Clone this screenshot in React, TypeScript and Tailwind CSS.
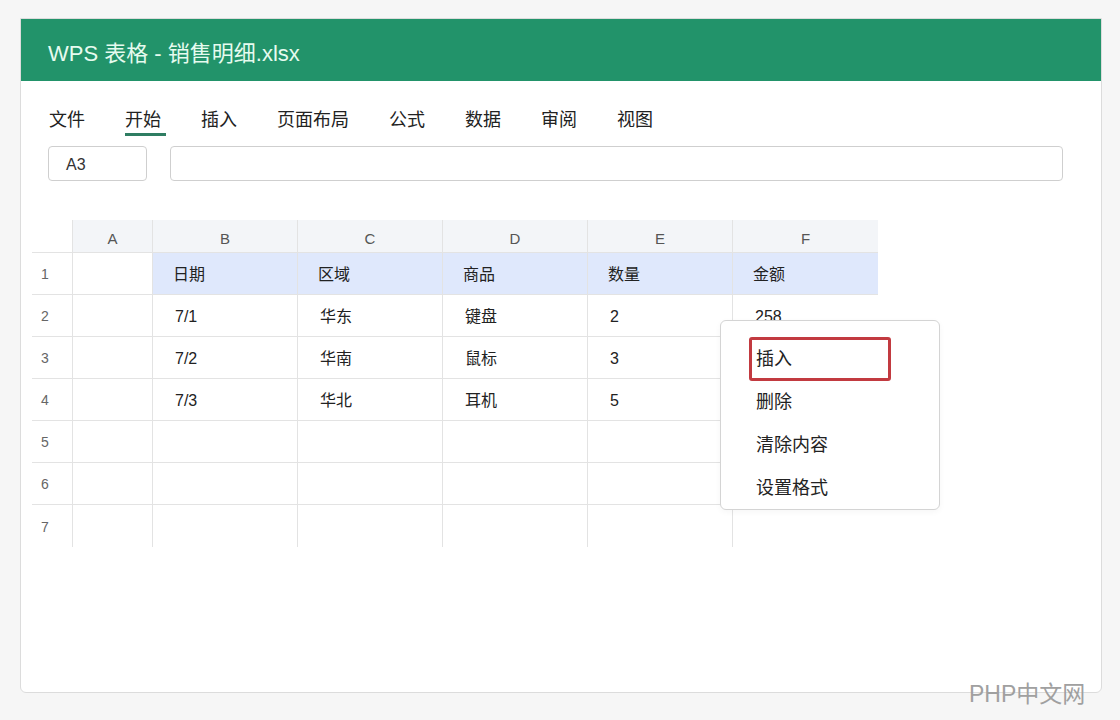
const tabs = ["文件", "开始", "插入", "页面布局", "公式", "数据", "审阅", "视图"];
const cols = ["A", "B", "C", "D", "E", "F"];
const header = ["日期", "区域", "商品", "数量", "金额"];
const rows = [
  ["7/1", "华东", "键盘", "2", "258"],
  ["7/2", "华南", "鼠标", "3", ""],
  ["7/3", "华北", "耳机", "5", ""],
];
const widths = ["w-[80px]", "w-[145px]", "w-[145px]", "w-[145px]", "w-[145px]", "w-[146px]"];
const font = "font-['Liberation_Sans','Noto_Sans_CJK_SC',sans-serif]";

function Row({ num, cells, head }: { num: number; cells: string[]; head?: boolean }) {
  const last = num === 7;
  return (
    <div className="flex h-[42px]">
      <div
        className={`flex w-[40px] items-center pt-[2px] pl-[9px] text-[14px] text-[#666] ${last ? "" : "border-b border-[#e3e3e3]"}`}
      >
        {num}
      </div>
      {widths.map((w, i) => {
        const val = i === 0 ? "" : cells[i - 1] ?? "";
        return (
          <div
            key={i}
            className={`flex items-center border-l border-[#e3e3e3] pt-[2px] ${w} ${last ? "" : "border-b"} ${
              head && i > 0 ? "bg-[#dfe8fc] pl-5" : "pl-[22px]"
            } text-[16px] text-[#222]`}
          >
            {val}
          </div>
        );
      })}
    </div>
  );
}

export default function App() {
  return (
    <div className={`relative min-h-[720px] bg-[#f6f6f6] pt-[18px] pl-[20px] ${font}`}>
      <div className="flex h-[675px] w-[1082px] flex-col overflow-hidden rounded-b-md border border-[#dcdcdc] bg-white">
        <div className="flex h-[62px] shrink-0 items-center bg-[#22936a] pt-[6px] pl-[27px] text-[22px] text-[#e6fbef]">
          WPS 表格 - 销售明细.xlsx
        </div>

        <div className="flex gap-[40px] pt-[26px] pl-[28px]">
          {tabs.map((t) => (
            <span key={t} className="relative pb-[3px] text-[18px] leading-[26px] text-[#222]">
              {t}
              {t === "开始" && (
                <span className="absolute bottom-0 left-0 -right-[5px] h-[3px] bg-[#2f7d62]" />
              )}
            </span>
          ))}
        </div>

        <div className="mt-[10px] flex gap-[23px] pl-[27px]">
          <div className="flex h-[35px] w-[99px] items-center rounded border border-[#cfcfcf] pt-[3px] pl-[17px] text-[16px] text-[#333]">
            A3
          </div>
          <div className="h-[35px] w-[893px] rounded border border-[#cfcfcf]" />
        </div>

        <div className="relative mt-[39px] ml-[11px]">
          <div className="flex h-[33px]">
            <div className="w-[40px] border-b border-[#e3e3e3]" />
            {cols.map((c, i) => (
              <div
                key={c}
                className={`flex items-center justify-center border-b border-l border-[#e3e3e3] bg-[#f3f5f8] pt-[7px] text-[15px] text-[#555] ${widths[i]}`}
              >
                {c}
              </div>
            ))}
          </div>
          <Row num={1} cells={header} head />
          {rows.map((r, i) => (
            <Row key={i} num={i + 2} cells={r} />
          ))}
          <Row num={5} cells={[]} />
          <Row num={6} cells={[]} />
          <Row num={7} cells={[]} />

          <div className="absolute top-[100px] left-[688px] h-[190px] w-[220px] rounded-md border border-[#d4d4d4] bg-white pt-[16px] pl-[28px] text-[18px] text-[#222] shadow-[0_2px_6px_rgba(0,0,0,0.04)]">
            <div className="flex h-[44px] w-[142px] items-center rounded-[3px] border-[3px] border-[#c23a40] pl-[4px]">
              插入
            </div>
            <div className="flex h-[43px] items-center pl-[7px]">删除</div>
            <div className="flex h-[43px] items-center pl-[7px]">清除内容</div>
            <div className="flex h-[43px] items-center pl-[7px]">设置格式</div>
          </div>
        </div>
      </div>

      <div className="absolute top-[677px] left-[969px] text-[23px] text-[#a0a0a0]">PHP中文网</div>
    </div>
  );
}
